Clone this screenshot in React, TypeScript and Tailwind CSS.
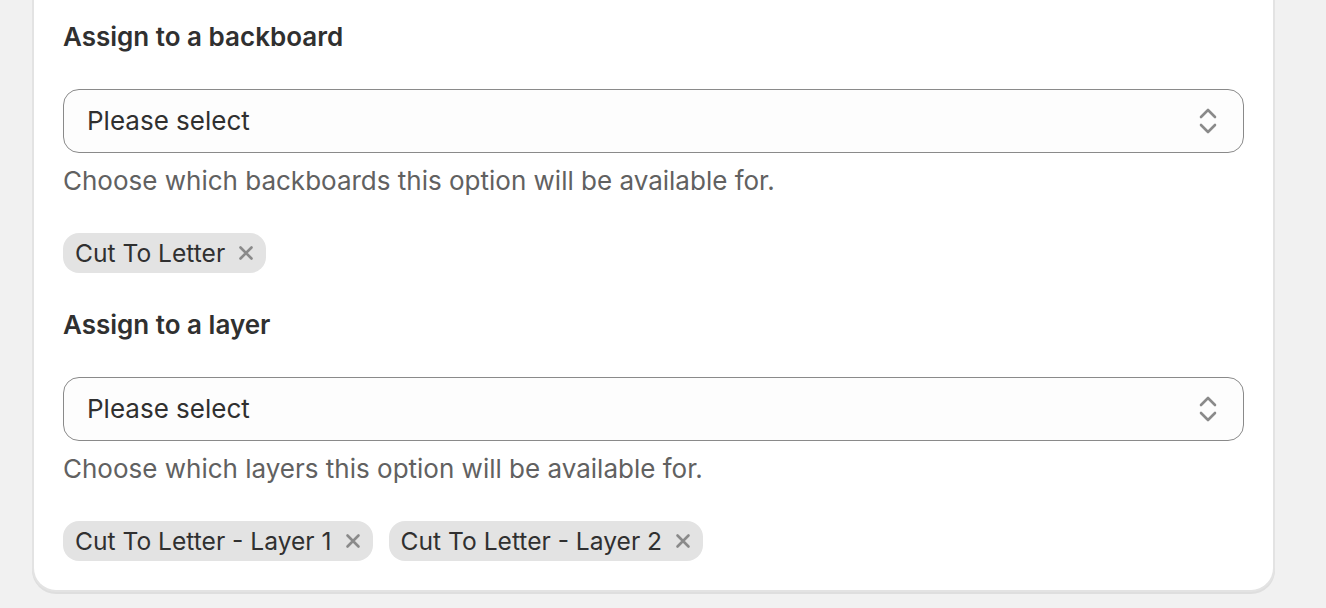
import React from "react";

function Chevrons() {
  return (
    <svg width="18" height="28" viewBox="0 0 18 28" fill="none" className="shrink-0">
      <path d="M2 10 L9 3 L16 10" stroke="#8a8a8a" strokeWidth="2.6" strokeLinecap="round" strokeLinejoin="round" />
      <path d="M2 18 L9 25 L16 18" stroke="#8a8a8a" strokeWidth="2.6" strokeLinecap="round" strokeLinejoin="round" />
    </svg>
  );
}

function XIcon() {
  return (
    <svg width="16" height="16" viewBox="0 0 16 16" fill="none" className="shrink-0">
      <path d="M2.5 2.5 L13.5 13.5 M13.5 2.5 L2.5 13.5" stroke="#8a8a8a" strokeWidth="2.6" strokeLinecap="round" />
    </svg>
  );
}

function Tag({ label }: { label: string }) {
  return (
    <div className="flex h-[40px] items-center gap-[13px] rounded-[16px] bg-[#e3e3e3] pl-[12px] pr-[12px] text-[24.6px] text-[#303030]">
      <span className="leading-[32px]">{label}</span>
      <XIcon />
    </div>
  );
}

function Section({ title, help, tags }: { title: string; help: string; tags: string[] }) {
  return (
    <div className="flex flex-col">
      <h2 className="text-[26px] font-semibold leading-[32px] text-[#303030]">{title}</h2>
      <div className="mt-[36px] flex h-[64px] items-center justify-between rounded-[16px] border border-[#8a8a8a] bg-[#fdfdfd] pl-[23px] pr-[26px]">
        <span className="text-[26px] leading-[32px] text-[#303030]">Please select</span>
        <Chevrons />
      </div>
      <p className="mt-[12px] text-[26px] leading-[32px] text-[#616161]">{help}</p>
      <div className="mt-[36px] flex gap-[16px]">
        {tags.map((t) => (
          <Tag key={t} label={t} />
        ))}
      </div>
    </div>
  );
}

export default function App() {
  return (
    <div
      className="h-[608px] w-full overflow-hidden bg-[#f1f1f1] pl-[32px] pr-[51px]"
      style={{ fontFamily: "Inter, 'Noto Sans', sans-serif" }}
    >
      <div className="rounded-b-[24px] border-x-2 border-b-2 border-[#e3e3e3] bg-white pl-[29px] pr-[29px] pb-[29px] pt-[21px] shadow-[0_2px_0_rgba(0,0,0,0.08)]">
        <div className="flex flex-col gap-[36px]">
          <Section
            title="Assign to a backboard"
            help="Choose which backboards this option will be available for."
            tags={["Cut To Letter"]}
          />
          <Section
            title="Assign to a layer"
            help="Choose which layers this option will be available for."
            tags={["Cut To Letter - Layer 1", "Cut To Letter - Layer 2"]}
          />
        </div>
      </div>
    </div>
  );
}
